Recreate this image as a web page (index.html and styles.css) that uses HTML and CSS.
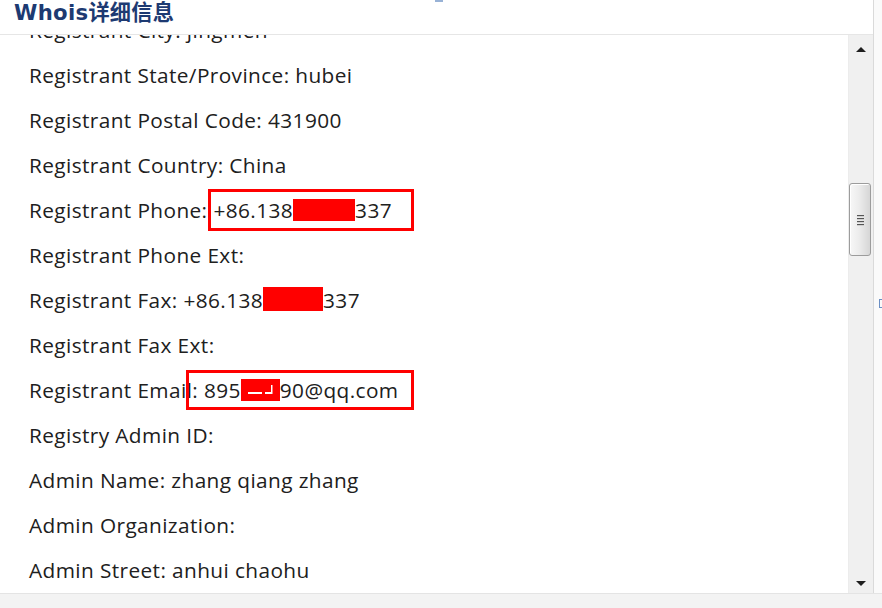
FILE: index.html
```html
<!DOCTYPE html>
<html lang="zh">
<head>
<meta charset="utf-8">
<title>Whois详细信息</title>
<link rel="stylesheet" href="styles.css">
</head>
<body>
<div class="screen">
  <div class="frame">
    <div class="panel">
      <div class="header">
        <h1 class="title">Whois详细信息</h1>
        <span class="tab-hint"></span>
      </div>
      <div class="main">
        <div class="content">
          <ul class="rows">
            <li class="row">Registrant City: jingmen</li>
            <li class="row">Registrant State/Province: hubei</li>
            <li class="row">Registrant Postal Code: 431900</li>
            <li class="row">Registrant Country: China</li>
            <li class="row">Registrant Phone:<span class="hl hl-phone">+86.138<span class="redact redact-phone"></span>337</span></li>
            <li class="row">Registrant Phone Ext:</li>
            <li class="row">Registrant Fax: +86.138<span class="redact redact-fax"></span>337</li>
            <li class="row">Registrant Fax Ext:</li>
            <li class="row">Registrant Emai<span class="hl hl-email">l: 895<svg class="redact-svg" width="39" height="22" viewBox="0 0 39 22"><rect width="39" height="22" fill="#ff0000"/><rect x="7" y="13" width="14" height="2" fill="#ffffff"/><rect x="24" y="13" width="7" height="2" fill="#ffffff"/><rect x="30" y="6" width="1.5" height="9" fill="#ffffff"/></svg>90@qq.com</span></li>
            <li class="row">Registry Admin ID:</li>
            <li class="row">Admin Name: zhang qiang zhang</li>
            <li class="row">Admin Organization:</li>
            <li class="row">Admin Street: anhui chaohu</li>
          </ul>
        </div>
        <div class="scrollbar">
          <div class="arrow arrow-up"></div>
          <div class="track">
            <div class="thumb">
              <span class="grip"></span><span class="grip"></span><span class="grip"></span><span class="grip"></span>
            </div>
          </div>
          <div class="arrow arrow-down"></div>
        </div>
      </div>
    </div>
    <div class="edge"><span class="edge-mark"></span></div>
  </div>
  <div class="footer"></div>
</div>
</body>
</html>
```
FILE: styles.css
```css
* { box-sizing: border-box; }
html, body { margin: 0; padding: 0; }
body {
  width: 882px;
  height: 608px;
  overflow: hidden;
  background: #f3f3f3;
  font-family: "Open Sans", "Noto Sans", "Noto Sans CJK SC", sans-serif;
}
.screen {
  display: flex;
  flex-direction: column;
  width: 882px;
  height: 608px;
}
.frame {
  display: flex;
  height: 593px;
}
.panel {
  width: 873px;
  display: flex;
  flex-direction: column;
}
.header {
  position: relative;
  height: 35px;
  background: #fff;
  border-bottom: 1px solid #e6e6e6;
  padding-left: 14px;
}
.title {
  margin: 0;
  font-family: "DejaVu Sans", "Noto Sans CJK SC", sans-serif;
  font-weight: bold;
  font-size: 21.2px;
  line-height: 25px;
  color: #1d3a72;
  letter-spacing: 0.3px;
}
.tab-hint {
  position: absolute;
  left: 435px;
  top: 0;
  width: 8px;
  height: 2px;
  background: #98b2d6;
}
.main {
  flex: 1;
  display: flex;
  min-height: 0;
}
.content {
  flex: 1;
  overflow: hidden;
  background: #fff;
}
.rows {
  list-style: none;
  margin: -27px 0 0 0;
  padding: 0 0 0 29px;
  font-size: 20.8px;
  letter-spacing: 0.4px;
  color: #202020;
}
.row {
  height: 45px;
  line-height: 45px;
  white-space: nowrap;
}
.hl {
  position: relative;
  display: inline-block;
  height: 45px;
}
.hl::after {
  content: "";
  position: absolute;
  border: 3px solid #ff0000;
}
.hl-phone { margin-left: 6px; }
.hl-phone::after { left: -5px; right: -22px; top: 1px; bottom: 2px; }
.hl-email::after { left: -1px; right: -15px; top: 2px; bottom: 3px; }
.redact {
  display: inline-block;
  height: 22px;
  background: #ff0000;
  vertical-align: -3px;
}
.redact-phone { width: 62px; }
.redact-fax { width: 60px; height: 24px; }
.redact-svg { vertical-align: -3px; display: inline-block; }

.scrollbar {
  width: 25px;
  display: flex;
  flex-direction: column;
  background: #f0f0f0;
  border-left: 1px solid #ececec;
}
.arrow {
  height: 24px;
  display: flex;
  align-items: center;
  justify-content: center;
}
.arrow::before {
  content: "";
  width: 0;
  height: 0;
  border-left: 5px solid transparent;
  border-right: 5px solid transparent;
}
.arrow-up::before { border-bottom: 5px solid #1e1e1e; margin-top: 4px; }
.arrow-down::before { border-top: 5px solid #1e1e1e; margin-top: 4px; }
.track {
  flex: 1;
  padding-top: 124px;
}
.thumb {
  width: 22px;
  height: 73px;
  border: 1px solid #9c9c9c;
  border-radius: 3px;
  background: linear-gradient(to right, #f7f7f7 0%, #ececec 45%, #d6d6d6 100%);
  box-shadow: inset 1px 1px 0 #ffffff;
  display: flex;
  flex-direction: column;
  align-items: center;
  justify-content: center;
  gap: 2px;
}
.grip {
  width: 7px;
  height: 1px;
  background: #555;
  box-shadow: 0 1px 0 #cfcfcf;
}
.edge {
  position: relative;
  flex: 1;
  background: #fafafa;
  border-left: 1px solid #dadada;
}
.edge-mark {
  position: absolute;
  right: 0;
  top: 299px;
  width: 3px;
  height: 9px;
  border: 1px solid #6b8fc4;
  border-right: none;
}
.footer {
  flex: 1;
  background: #f3f3f3;
  border-top: 1px solid #e4e4e4;
}
```
